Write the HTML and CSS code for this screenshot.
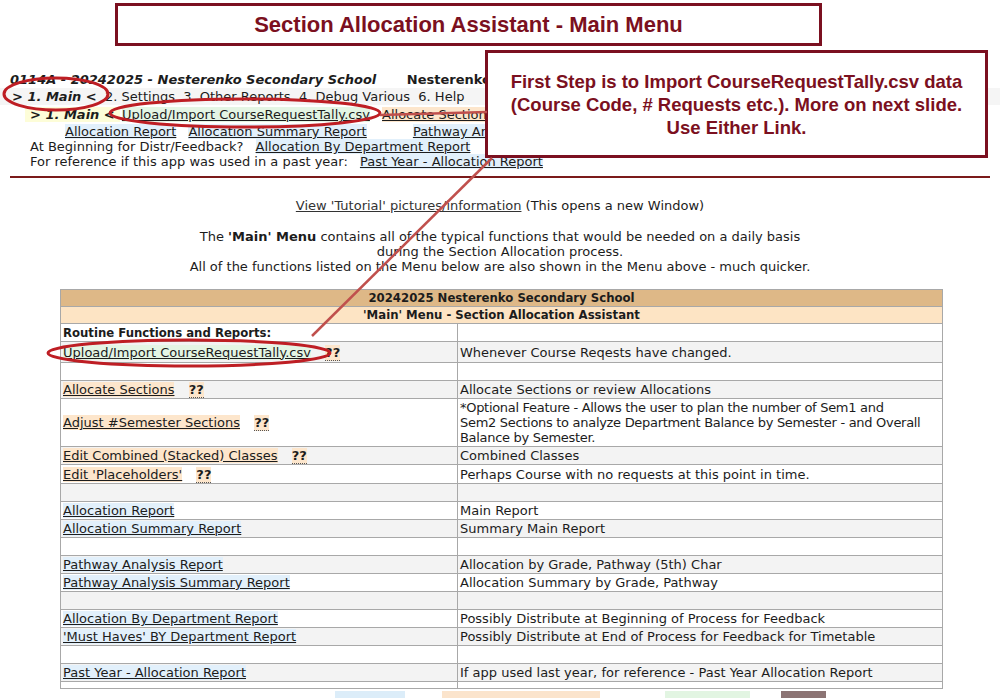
FILE: index.html
```html
<!DOCTYPE html>
<html>
<head>
    <title>Section Allocation Assistant - Main Menu</title>
    <link rel="stylesheet" href="styles.css">
</head>
<body>
    <div class="slideTitle">Section Allocation Assistant - Main Menu</div>

    <div class="pageHeader">
        <div class="schoolLine">
            <span class="schoolName">0114A - 20242025 - Nesterenko Secondary School</span>
            <span class="userName">Nesterenko</span>
        </div>
        <div class="topMenu">
            <span class="current">&gt; 1. Main &lt;</span>&nbsp; 2. Settings&nbsp; 3. Other Reports&nbsp; 4. Debug Various&nbsp; 6. Help
        </div>
        <div class="subMenu">
            <span class="current">&gt; 1. Main &lt;</span>
            <a class="lnkImport">Upload/Import CourseRequestTally.csv</a>
            <a class="lnkEdit">Allocate Sections</a>
        </div>
        <div class="subMenu reports">
            <a class="lnkReport">Allocation Report</a>
            <a class="lnkReport">Allocation Summary Report</a>
            <a class="lnkReport far">Pathway Analysis Report</a>
        </div>
        <div class="subMenu">
            At Beginning for Distr/Feedback? <a class="lnkReport gap">Allocation By Department Report</a>
        </div>
        <div class="subMenu">
            For reference if this app was used in a past year: <a class="lnkReport gap">Past Year - Allocation Report</a>
        </div>
    </div>

    <hr class="redRule">

    <div class="tutorial"><a class="plainLink">View 'Tutorial' pictures/information</a> (This opens a new Window)</div>

    <div class="intro">
        The <b>'Main' Menu</b> contains all of the typical functions that would be needed on a daily basis<br>
        during the Section Allocation process.<br>
        All of the functions listed on the Menu below are also shown in the Menu above - much quicker.
    </div>

    <table class="menuTable">
        <colgroup><col class="colLeft"><col></colgroup>
        <tr><th colspan="2" class="schoolHead">20242025 Nesterenko Secondary School</th></tr>
        <tr><th colspan="2" class="menuHead">'Main' Menu - Section Allocation Assistant</th></tr>
        <tr><td class="groupTitle">Routine Functions and Reports:</td><td></td></tr>
        <tr class="alt rowImport"><td><a class="lnkImport">Upload/Import CourseRequestTally.csv</a> <span class="help">??</span></td><td>Whenever Course Reqests have changed.</td></tr>
        <tr><td></td><td></td></tr>
        <tr class="alt"><td><a class="lnkEdit">Allocate Sections</a> <span class="help">??</span></td><td>Allocate Sections or review Allocations</td></tr>
        <tr><td><a class="lnkEdit">Adjust #Semester Sections</a> <span class="help">??</span></td><td class="tight">*Optional Feature - Allows the user to plan the number of Sem1 and<br>Sem2 Sections to analyze Department Balance by Semester - and Overall Balance by Semester.</td></tr>
        <tr class="alt"><td><a class="lnkEdit">Edit Combined (Stacked) Classes</a> <span class="help">??</span></td><td>Combined Classes</td></tr>
        <tr class="rowPlace"><td><a class="lnkEdit">Edit 'Placeholders'</a> <span class="help">??</span></td><td>Perhaps Course with no requests at this point in time.</td></tr>
        <tr class="alt"><td></td><td></td></tr>
        <tr><td><a class="lnkReport">Allocation Report</a></td><td>Main Report</td></tr>
        <tr class="alt"><td><a class="lnkReport">Allocation Summary Report</a></td><td>Summary Main Report</td></tr>
        <tr><td></td><td></td></tr>
        <tr class="alt"><td><a class="lnkReport">Pathway Analysis Report</a></td><td>Allocation by Grade, Pathway (5th) Char</td></tr>
        <tr><td><a class="lnkReport">Pathway Analysis Summary Report</a></td><td>Allocation Summary by Grade, Pathway</td></tr>
        <tr class="alt"><td></td><td></td></tr>
        <tr><td><a class="lnkReport">Allocation By Department Report</a></td><td>Possibly Distribute at Beginning of Process for Feedback</td></tr>
        <tr class="alt"><td><a class="lnkReport">'Must Haves' BY Department Report</a></td><td>Possibly Distribute at End of Process for Feedback for Timetable</td></tr>
        <tr><td></td><td></td></tr>
        <tr class="alt"><td><a class="lnkReport">Past Year - Allocation Report</a></td><td>If app used last year, for reference - Past Year Allocation Report</td></tr>
        <tr class="rowLast"><td></td><td></td></tr>
    </table>

    <div class="footerButtons">
        <span class="btnBlue"></span>
        <span class="btnPeach"></span>
        <span class="btnGreen"></span>
        <span class="btnDark"></span>
    </div>

    <!-- slide annotations drawn over the page -->
    <div class="callout">
        First Step is to Import CourseRequestTally.csv data<br>
        (Course Code, # Requests etc.). More on next slide.<br>
        Use Either Link.
    </div>

    <svg class="marks" width="1000" height="698" viewBox="0 0 1000 698">
        <ellipse cx="56" cy="94" rx="52" ry="16" fill="none" stroke="#be1e24" stroke-width="3"/>
        <ellipse cx="245" cy="113" rx="135" ry="14" fill="none" stroke="#be1e24" stroke-width="3"/>
        <ellipse cx="189" cy="353" rx="141" ry="13" fill="none" stroke="#be1e24" stroke-width="3"/>
        <line x1="380" y1="115" x2="487" y2="112" stroke="#c0504d" stroke-width="2.5"/>
        <line x1="492" y1="158" x2="312" y2="336" stroke="#c0504d" stroke-width="2.5"/>
    </svg>
</body>
</html>
```

FILE: styles.css
```css
body {
    margin: 0;
    width: 1000px;
    height: 698px;
    overflow: hidden;
    position: relative;
    font-family: "DejaVu Sans", Verdana, sans-serif;
    font-size: 13px;
    color: #1c1c1c;
    background-color: #ffffff;
}

a {
    color: #1c1c1c;
    text-decoration: underline;
}

/* slide title box */
.slideTitle {
    margin: 3px 0 0 115px;
    width: 701px;
    height: 37px;
    line-height: 37px;
    border: 3px solid #7b1020;
    text-align: center;
    font-family: "Liberation Sans Narrow", "Liberation Sans", sans-serif;
    font-stretch: condensed;
    font-weight: bold;
    font-size: 22px;
    color: #7b1020;
}

/* page header / menu */
.pageHeader {
    margin-top: 26px;
    padding-left: 10px;
}

.schoolLine {
    height: 16px;
    line-height: 16px;
    font-weight: bold;
    font-style: italic;
}

.userName {
    margin-left: 26px;
    font-style: normal;
}

.topMenu {
    height: 17px;
    line-height: 17px;
    margin-left: -10px;
    padding-left: 12px;
    background-color: #f5f5f5;
}

.current {
    font-weight: bold;
    font-style: italic;
}

.subMenu {
    height: 15px;
    line-height: 15px;
    padding-left: 20px;
    white-space: nowrap;
}

.topMenu + .subMenu {
    height: 19px;
    line-height: 19px;
}

.subMenu .current {
    background-color: #fdfdd8;
    padding: 0 5px;
    margin-left: -5px;
}

.subMenu .lnkImport { margin-left: -2px; }
.subMenu .lnkEdit { margin-left: 8px; }
.subMenu .gap { margin-left: 8px; }

.subMenu.reports { padding-left: 55px; }
.subMenu.reports .lnkReport { margin-right: 8px; }
.subMenu.reports .far { margin-left: 34px; }

.lnkImport { background-color: #e4f5e4; }
.lnkEdit { background-color: #fde6cc; }
.lnkReport { background-color: #e2f0fb; }

.redRule {
    margin: 7px 10px 0 10px;
    border: 0;
    border-top: 2px solid #7b1a1a;
    height: 0;
}

/* intro text */
.tutorial {
    margin-top: 20px;
    line-height: 15px;
    text-align: center;
}

.plainLink {
    color: #333333;
}

.intro {
    margin-top: 16px;
    line-height: 15px;
    text-align: center;
}

/* main menu table */
.menuTable {
    margin: 15px 0 0 60px;
    width: 883px;
    table-layout: fixed;
    border-collapse: collapse;
    border: 1px solid #a8a8a8;
}

.menuTable .colLeft { width: 397px; }

.menuTable th {
    height: 16px;
    padding: 0;
    line-height: 16px;
    border: 1px solid #a8a8a8;
    font-family: "DejaVu Sans Condensed", "DejaVu Sans", sans-serif;
    font-size: 13px;
    color: #1c1c1c;
}

.schoolHead { background-color: #deb887; }
.menuHead { background-color: #fde4c4; }

.menuTable td {
    height: 15px;
    padding: 1px 2px;
    line-height: 15px;
    border: 1px solid #a8a8a8;
    vertical-align: middle;
}

.menuTable td.tight { letter-spacing: -0.3px; }

.menuTable tr.alt td { background-color: #f3f3f3; }
.menuTable tr.rowImport td { height: 18px; }
.menuTable tr.rowPlace td { height: 16px; }
.menuTable tr.rowLast td {
    height: 6px;
    padding: 0;
    border-bottom: 0;
}

.groupTitle {
    font-family: "DejaVu Sans Condensed", "DejaVu Sans", sans-serif;
    font-weight: bold;
}

.help {
    margin-left: 10px;
    font-weight: bold;
    background-color: #fde6cc;
    border-bottom: 1px dotted #555555;
}

/* tops of the buttons below the table */
.footerButtons {
    display: flex;
    margin-top: 2px;
}

.footerButtons span {
    display: block;
    height: 20px;
}

.btnBlue { margin-left: 335px; width: 70px; background-color: #dcedf9; }
.btnPeach { margin-left: 37px; width: 158px; background-color: #fbe4cc; }
.btnGreen { margin-left: 65px; width: 85px; background-color: #e2f5e2; }
.btnDark { margin-left: 31px; width: 45px; background-color: #8c7474; }

/* annotations */
.callout {
    position: absolute;
    left: 485px;
    top: 50px;
    width: 497px;
    height: 102px;
    border: 3px solid #7b1020;
    background-color: #ffffff;
    display: flex;
    align-items: center;
    justify-content: center;
    text-align: center;
    font-family: "Liberation Sans", Arial, sans-serif;
    font-weight: bold;
    font-size: 18.5px;
    line-height: 23px;
    color: #7b1020;
}

.marks {
    position: absolute;
    left: 0;
    top: 0;
    pointer-events: none;
}
```
